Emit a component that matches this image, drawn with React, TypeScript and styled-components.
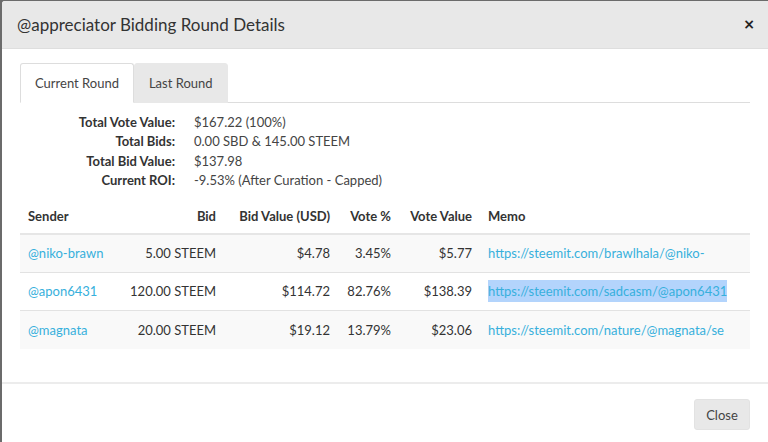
import styled, { createGlobalStyle } from "styled-components";

const GlobalStyle = createGlobalStyle`
  html, body {
    margin: 0;
    padding: 0;
    background-color: #6b6b6b;
    overflow: hidden;
  }
  body {
    font-family: Lato, "Open Sans", sans-serif;
    color: #333;
  }
`;

const summary = [
  ["Total Vote Value:", "$167.22 (100%)"],
  ["Total Bids:", "0.00 SBD & 145.00 STEEM"],
  ["Total Bid Value:", "$137.98"],
  ["Current ROI:", "-9.53% (After Curation - Capped)"],
];

const bids = [
  {
    sender: "@niko-brawn",
    bid: "5.00 STEEM",
    usd: "$4.78",
    pct: "3.45%",
    value: "$5.77",
    memo: "https://steemit.com/brawlhala/@niko-",
    selected: false,
  },
  {
    sender: "@apon6431",
    bid: "120.00 STEEM",
    usd: "$114.72",
    pct: "82.76%",
    value: "$138.39",
    memo: "https://steemit.com/sadcasm/@apon6431",
    selected: true,
  },
  {
    sender: "@magnata",
    bid: "20.00 STEEM",
    usd: "$19.12",
    pct: "13.79%",
    value: "$23.06",
    memo: "https://steemit.com/nature/@magnata/se",
    selected: false,
  },
];

const App = () => {
  return (
    <>
      <GlobalStyle />
      <S.Modal>
        <S.Header>
          <S.Title>@appreciator Bidding Round Details</S.Title>
          <S.CloseX>×</S.CloseX>
        </S.Header>
        <S.Body>
          <S.Tabs>
            <S.Tab $active>Current Round</S.Tab>
            <S.Tab>Last Round</S.Tab>
          </S.Tabs>
          <S.Summary>
            {summary.map(([label, value]) => (
              <S.SummaryRow key={label}>
                <S.SummaryLabel>{label}</S.SummaryLabel>
                <S.SummaryValue>{value}</S.SummaryValue>
              </S.SummaryRow>
            ))}
          </S.Summary>
          <S.Table>
            <colgroup>
              <col width={100} />
              <col width={104} />
              <col width={114} />
              <col width={61} />
              <col width={81} />
              <col width={270} />
            </colgroup>
            <thead>
              <tr>
                <S.Th>Sender</S.Th>
                <S.Th $right>Bid</S.Th>
                <S.Th $right>Bid Value (USD)</S.Th>
                <S.Th $right>Vote %</S.Th>
                <S.Th $right>Vote Value</S.Th>
                <S.Th>Memo</S.Th>
              </tr>
            </thead>
            <tbody>
              {bids.map((b) => (
                <S.Row key={b.sender}>
                  <S.Td>
                    <S.Link>{b.sender}</S.Link>
                  </S.Td>
                  <S.Td $right>{b.bid}</S.Td>
                  <S.Td $right>{b.usd}</S.Td>
                  <S.Td $right>{b.pct}</S.Td>
                  <S.Td $right>{b.value}</S.Td>
                  <S.Td>
                    <S.Link $selected={b.selected}>{b.memo}</S.Link>
                  </S.Td>
                </S.Row>
              ))}
            </tbody>
          </S.Table>
        </S.Body>
        <S.Footer>
          <S.CloseBtn>Close</S.CloseBtn>
        </S.Footer>
      </S.Modal>
    </>
  );
};

const S = {
  Modal: styled.div`
    margin: 1px 0 0 2px;
    height: 460px;
    background-color: #fff;
    border-top-left-radius: 3px;
    overflow: hidden;
  `,

  Header: styled.div`
    height: 47px;
    display: flex;
    align-items: center;
    justify-content: space-between;
    padding: 0 13px 0 15px;
    background-color: #e8e8e8;
    border-bottom: 1px solid #dedede;
  `,

  Title: styled.h4`
    margin: 0;
    font-size: 17px;
    font-weight: 400;
    color: #333;
  `,

  CloseX: styled.span`
    font-family: "DejaVu Sans", sans-serif;
    font-size: 14px;
    font-weight: 700;
    color: #222;
    margin-top: -1px;
  `,

  Body: styled.div`
    padding: 14px 16px 0 18px;
    height: 319px;
    border-bottom: 2px solid #ececec;
  `,

  Tabs: styled.div`
    display: flex;
    border-bottom: 1px solid #ddd;
    width: 730px;
  `,

  Tab: styled.div<{ $active?: boolean }>`
    height: 38px;
    display: flex;
    align-items: center;
    padding: 0 14px;
    font-size: 13px;
    color: #444;
    border-radius: 3px 3px 0 0;
    background-color: ${(p) => (p.$active ? "#fff" : "#e8e8e8")};
    border: 1px solid ${(p) => (p.$active ? "#ddd" : "#e8e8e8")};
    border-bottom-color: ${(p) => (p.$active ? "#fff" : "#e8e8e8")};
    margin-bottom: -1px;
  `,

  Summary: styled.div`
    display: flex;
    flex-direction: column;
    padding-top: 10px;
    margin-bottom: 9px;
  `,

  SummaryRow: styled.div`
    display: grid;
    grid-template-columns: 155px 1fr;
    column-gap: 19px;
    line-height: 19.4px;
    font-size: 13px;
  `,

  SummaryLabel: styled.span`
    text-align: right;
    font-weight: 700;
    color: #333;
  `,

  SummaryValue: styled.span`
    color: #444;
  `,

  Table: styled.table`
    width: 730px;
    border-collapse: collapse;
    font-size: 13px;
    table-layout: fixed;
  `,

  Th: styled.th<{ $right?: boolean }>`
    height: 33px;
    padding: 0 8px;
    text-align: ${(p) => (p.$right ? "right" : "left")};
    font-weight: 700;
    color: #333;
    border-bottom: 2px solid #e6e6e6;
    white-space: nowrap;
  `,

  Row: styled.tr`
    height: 38.5px;
    border-top: 1px solid #e2e2e2;
    &:nth-child(odd) {
      background-color: #f9f9f9;
    }
    &:first-child {
      border-top: none;
    }
  `,

  Td: styled.td<{ $right?: boolean }>`
    padding: 0 8px;
    text-align: ${(p) => (p.$right ? "right" : "left")};
    color: #333;
    white-space: nowrap;
    overflow: hidden;
  `,

  Link: styled.span<{ $selected?: boolean }>`
    color: #37b0dc;
    background-color: ${(p) => (p.$selected ? "#b3d4fc" : "transparent")};
    padding: ${(p) => (p.$selected ? "3px 0" : "0")};
  `,

  Footer: styled.div`
    display: flex;
    justify-content: flex-end;
    padding: 15px 18px 0 0;
  `,

  CloseBtn: styled.button`
    font-family: Lato, "Open Sans", sans-serif;
    font-size: 13px;
    color: #444;
    background-color: #e8e8e8;
    border: 1px solid #e2e2e2;
    border-radius: 3px;
    width: 56px;
    height: 31px;
    cursor: pointer;
  `,
};

export default App;
